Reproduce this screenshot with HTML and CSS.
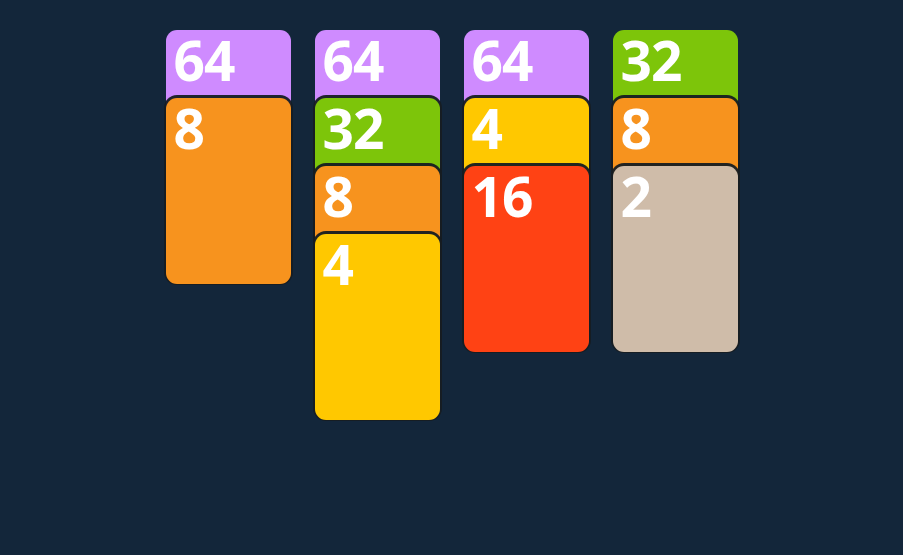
FILE: index.html
```html
<!DOCTYPE html>
<html>
<head>
<meta charset="utf-8">
<link rel="stylesheet" href="styles.css">
</head>
<body>
<div class="board">
  <div class="stack">
    <div class="card c64">64</div>
    <div class="card c8">8</div>
  </div>
  <div class="stack">
    <div class="card c64">64</div>
    <div class="card c32">32</div>
    <div class="card c8">8</div>
    <div class="card c4">4</div>
  </div>
  <div class="stack">
    <div class="card c64">64</div>
    <div class="card c4">4</div>
    <div class="card c16">16</div>
  </div>
  <div class="stack">
    <div class="card c32">32</div>
    <div class="card c8">8</div>
    <div class="card c2">2</div>
  </div>
</div>
</body>
</html>
```
FILE: styles.css
```css
html, body {
  margin: 0;
  padding: 0;
  height: 100%;
}
body {
  background: #13263a;
  font-family: "Open Sans", "Noto Sans", sans-serif;
  overflow: hidden;
}
.board {
  display: flex;
  justify-content: center;
  gap: 24px;
  padding-top: 30px;
}
.stack {
  display: flex;
  flex-direction: column;
  width: 125px;
}
.card {
  position: relative;
  box-sizing: border-box;
  height: 186px;
  border-radius: 11px;
  box-shadow: 0 -1px 0 2px rgba(22, 28, 34, 0.95);
  color: #ffffff;
  font-weight: 700;
  font-size: 55px;
  line-height: 1;
  letter-spacing: -1px;
  padding: 2px 0 0 8px;
}
.card:first-child {
  box-shadow: none;
}
.card + .card {
  margin-top: -118px;
}
.c64 { background: #cf8bff; }
.c32 { background: #7dc50a; }
.c8  { background: #f7931e; }
.c4  { background: #ffc800; }
.c16 { background: #ff4214; }
.c2  { background: #cfbca9; }
```
